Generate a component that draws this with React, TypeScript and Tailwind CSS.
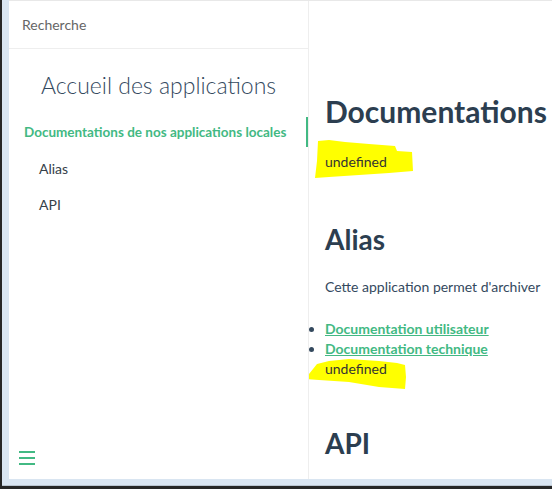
import React from 'react';

const font = { fontFamily: 'Lato, "Source Sans Pro", "Liberation Sans", sans-serif' };

function Highlights() {
  // hand-drawn yellow marker strokes over the two "undefined" lines
  return (
    <svg className="pointer-events-none absolute left-0 top-0 h-[479px] w-[243px]" viewBox="0 0 243 479">
      <path
        d="M9 140 L20 139 L36 141 L60 143 L86 145 L88 150 L103 151 L104 170 L80 172 L50 174 L20 176 L6 177 L8 160 Z"
        fill="#ffff00"
      />
      <path
        d="M8 363 L20 360 L40 358 L70 360 L88 362 L96 364 L97 376 L96 388 L70 386 L40 381 L10 379 L-4 378 Z"
        fill="#ffff00"
      />
    </svg>
  );
}

export default function App() {
  return (
    <div className="h-[489px] w-[552px] overflow-hidden bg-[#262626] pb-[3px] pl-[2px]" style={font}>
      <div className="h-full w-full border-b border-[#b9c4cf] bg-[#d9e5f1] pb-[6px] pl-[7px]">
        <div className="flex h-full w-full border-t border-[#e8e8e8] bg-white">
          <aside className="flex w-[300px] shrink-0 flex-col border-r border-[#eee]">
            <div className="flex h-[48px] items-center border-b border-[#eee] pl-[13px] text-[14px] text-[#666]">
              Recherche
            </div>
            <h1 className="mt-[20px] text-center text-[23px] font-light leading-[32px] text-[#34495e]">
              Accueil des applications
            </h1>
            <nav className="mt-[16px] text-[14px]">
              <div className="flex h-[30px] items-center border-r-2 border-[#42b983] pl-[15px] text-[13.5px] font-bold text-[#42b983]">
                Documentations de nos applications locales
              </div>
              <div className="flex h-[36px] items-center pl-[30px] pt-[6px] text-[#364149]">Alias</div>
              <div className="flex h-[36px] items-center pl-[30px] pt-[6px] text-[#364149]">API</div>
            </nav>
            <div className="mt-auto mb-[14px] ml-[10px] flex w-[16px] flex-col gap-[4px]">
              <span className="h-[2px] w-[16px] bg-[#42b983]" />
              <span className="h-[2px] w-[16px] bg-[#42b983]" />
              <span className="h-[2px] w-[16px] bg-[#42b983]" />
            </div>
          </aside>

          <main className="relative min-w-0 flex-1 overflow-hidden pl-[16px] text-[14px] text-[#34495e]">
            <Highlights />
            <div className="relative">
              <h1 className="mt-[86px] whitespace-nowrap text-[30px] font-bold leading-[48px] text-[#2c3e50]">
                Documentations
              </h1>
              <p className="mt-[17px] leading-[20px] text-[#333]">undefined</p>
              <h2 className="mt-[47px] text-[28px] font-bold leading-[40px] text-[#2c3e50]">Alias</h2>
              <p className="mt-[18px] whitespace-nowrap leading-[20px]">Cette application permet d'archiver</p>
              <ul className="mt-[22px] list-outside list-disc pl-0 marker:text-[#34495e]">
                <li className="leading-[20px]">
                  <a className="font-bold text-[#42b983] underline" href="#">Documentation utilisateur</a>
                </li>
                <li className="leading-[20px]">
                  <a className="font-bold text-[#42b983] underline" href="#">Documentation technique</a>
                </li>
              </ul>
              <p className="leading-[20px] text-[#333]">undefined</p>
              <h2 className="mt-[44px] text-[28px] font-bold leading-[40px] text-[#2c3e50]">API</h2>
            </div>
          </main>
        </div>
      </div>
    </div>
  );
}
